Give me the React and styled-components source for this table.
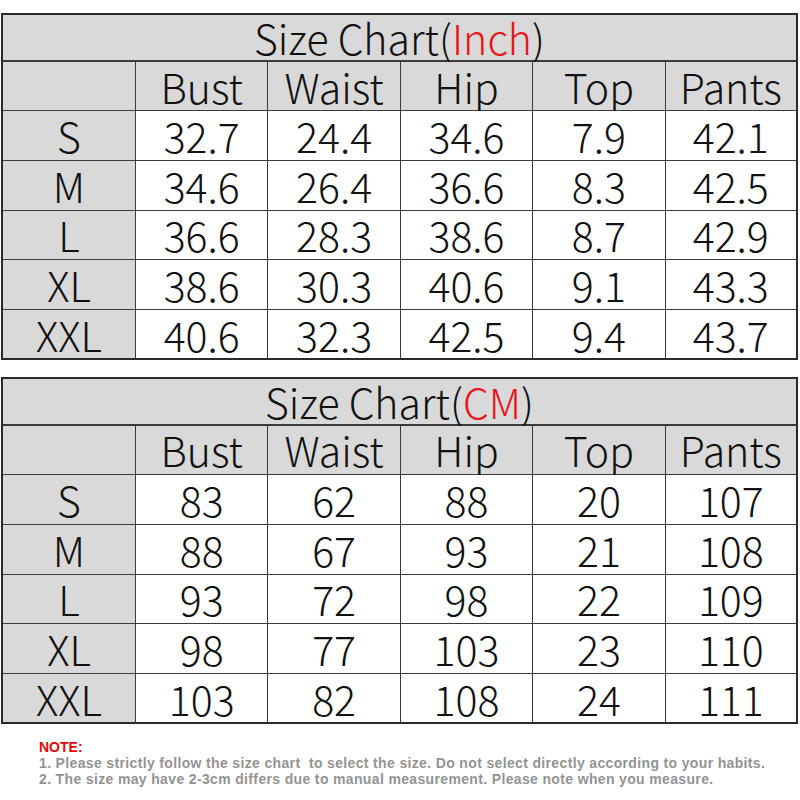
import React from 'react';
import styled, { createGlobalStyle } from 'styled-components';

const GlobalStyle = createGlobalStyle`
  html, body {
    margin: 0;
    padding: 0;
    background: #fff;
  }
  * {
    box-sizing: border-box;
  }
`;

const Page = styled.div`
  width: 800px;
  height: 800px;
  padding: 13px 2px 0 1px;
  display: flex;
  flex-direction: column;
  font-family: "Noto Sans CJK SC", "Noto Sans", sans-serif;
  font-weight: 300;
  color: #111;
`;

const Table = styled.div`
  display: grid;
  grid-template-columns: 133px repeat(5, 1fr);
  border-top: 2px solid #2a2a2a;
  border-left: 2px solid #2a2a2a;
  & + & {
    margin-top: 17px;
  }
`;

const TitleCell = styled.div`
  grid-column: 1 / -1;
  height: 47px;
  display: flex;
  align-items: center;
  justify-content: center;
  background: #d9d9d9;
  border-right: 2px solid #2a2a2a;
  border-bottom: 2px solid #3a3a3a;
  font-size: 41px;
  line-height: 1;
`;

const Unit = styled.span`
  color: #e8161c;
`;

const Cell = styled.div`
  height: ${p => (p.$head ? 49 : 49.8)}px;
  display: flex;
  align-items: center;
  justify-content: center;
  background: ${p => (p.$shade ? '#d9d9d9' : '#fff')};
  border-right: ${p => (p.$last ? '2px solid #2a2a2a' : '1.5px solid #3a3a3a')};
  border-bottom: ${p => (p.$bottom ? '2px solid #2a2a2a' : '1.5px solid #3a3a3a')};
  font-size: 41px;
  line-height: 1;
`;

const Notes = styled.div`
  padding: 15px 0 0 38px;
  font-family: "Liberation Sans", Arial, sans-serif;
  font-weight: 700;
  font-size: 14px;
  line-height: 16px;
  color: #939393;
  letter-spacing: 0.35px;
  white-space: nowrap;
`;

const NoteTitle = styled.div`
  color: #e20a0a;
  letter-spacing: 0;
`;

const cols = ['Bust', 'Waist', 'Hip', 'Top', 'Pants'];
const sizes = ['S', 'M', 'L', 'XL', 'XXL'];

const inch = [
  ['32.7', '24.4', '34.6', '7.9', '42.1'],
  ['34.6', '26.4', '36.6', '8.3', '42.5'],
  ['36.6', '28.3', '38.6', '8.7', '42.9'],
  ['38.6', '30.3', '40.6', '9.1', '43.3'],
  ['40.6', '32.3', '42.5', '9.4', '43.7'],
];

const cm = [
  ['83', '62', '88', '20', '107'],
  ['88', '67', '93', '21', '108'],
  ['93', '72', '98', '22', '109'],
  ['98', '77', '103', '23', '110'],
  ['103', '82', '108', '24', '111'],
];

const SizeTable = ({ unit, rows }) => (
  <Table>
    <TitleCell>
      Size Chart(<Unit>{unit}</Unit>)
    </TitleCell>
    <Cell $head $shade />
    {cols.map((c, i) => (
      <Cell key={c} $head $shade $last={i === cols.length - 1}>
        {c}
      </Cell>
    ))}
    {rows.map((row, r) => (
      <React.Fragment key={sizes[r]}>
        <Cell $shade $bottom={r === rows.length - 1}>
          {sizes[r]}
        </Cell>
        {row.map((v, i) => (
          <Cell key={i} $last={i === row.length - 1} $bottom={r === rows.length - 1}>
            {v}
          </Cell>
        ))}
      </React.Fragment>
    ))}
  </Table>
);

export default function App() {
  return (
    <Page>
      <GlobalStyle />
      <SizeTable unit="Inch" rows={inch} />
      <SizeTable unit="CM" rows={cm} />
      <Notes>
        <NoteTitle>NOTE:</NoteTitle>
        <div>1. Please strictly follow the size chart&nbsp; to select the size. Do not select directly according to your habits.</div>
        <div>2. The size may have 2-3cm differs due to manual measurement. Please note when you measure.</div>
      </Notes>
    </Page>
  );
}
